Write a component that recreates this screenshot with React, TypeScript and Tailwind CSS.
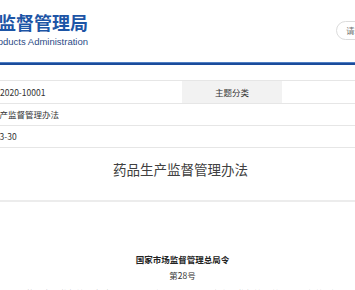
export default function App() {
  return (
    <div className="relative h-[290px] w-[355px] overflow-hidden bg-white font-['Noto_Sans_CJK_SC',sans-serif] text-[#333]">
      {/* header */}
      <header className="flex h-[62px] items-start">
        <div className="flex w-[88px] shrink-0 flex-col items-end pt-[10px]">
          <div className="whitespace-nowrap text-[18px] font-bold leading-[24px] text-[#1d55a6]">国家药品监督管理局</div>
          <div className="mt-[2px] whitespace-nowrap font-['Liberation_Sans',sans-serif] text-[9.5px] leading-[12px] text-[#2c4b86]">
            National Medical Products Administration
          </div>
        </div>
        <div className="ml-[248px] mt-[21px] flex h-[19px] w-[120px] shrink-0 items-center rounded-full border border-[#dcdcdc] pl-[9px] text-[8.5px] text-[#777]">
          请输入关键字
        </div>
      </header>
      <div className="h-[3px] border-t border-[#4f7fc4] bg-[#1b4c9b]" />

      {/* info table */}
      <div className="mt-[15px] border-t border-[#e6e6e6] text-[8.5px]">
        <div className="grid h-[23px] grid-cols-[182px_100px_1fr] border-b border-[#e6e6e6]">
          <div className="flex items-center whitespace-nowrap">2020-10001</div>
          <div className="flex items-center justify-center bg-[#f2f2f2]">主题分类</div>
          <div />
        </div>
        <div className="flex h-[22px] items-center border-b border-[#e6e6e6]">
          <span className="-ml-[26px] whitespace-nowrap">药品生产监督管理办法</span>
        </div>
        <div className="flex h-[22px] items-center border-b border-[#e6e6e6]">
          <span className="-ml-[27px] whitespace-nowrap">2020-03-30</span>
        </div>
      </div>

      {/* title */}
      <div className="h-[54px] border-b-2 border-[#ececec] pl-[6px] pt-[13px] text-center text-[13.5px] leading-[16px] text-[#404040]">
        药品生产监督管理办法
      </div>

      {/* body */}
      <div className="pl-[10px] pt-[51px] text-center text-[8.5px] leading-[12px]">
        <div className="font-bold text-[#222]">国家市场监督管理总局令</div>
        <div className="mt-[4px]">第28号</div>
      </div>
      <p className="mt-[5px] indent-[17px] text-[8.5px] leading-[14px] text-[#444]">
        《药品生产监督管理办法》已于2020年1月15日经国家市场监督管理总局2020年第1次局务会议审议通过，现予公布，自2020年7月1日起施行。
      </p>
    </div>
  )
}
